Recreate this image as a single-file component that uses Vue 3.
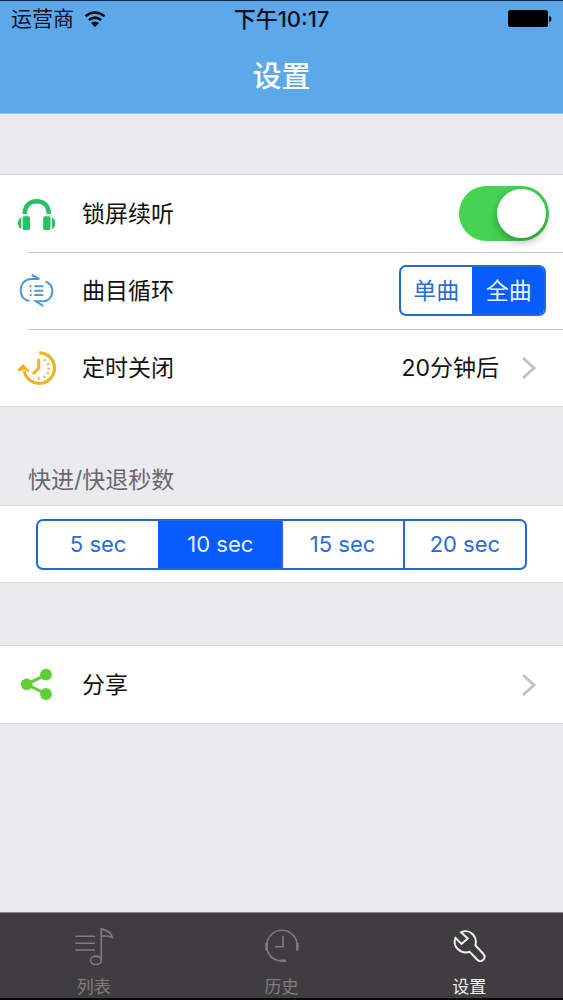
<script setup>
import { ref } from 'vue'

const keepPlaying = ref(true)
const loopMode = ref('all')
const loopOptions = [
  { value: 'one', label: '单曲' },
  { value: 'all', label: '全曲' },
]
const seconds = ref(10)
const secondOptions = [5, 10, 15, 20]
</script>

<template>
  <div class="page">
    <header class="header">
      <div class="status">
        <div class="carrier">
          <span>运营商</span>
          <svg class="wifi" viewBox="0 0 22 17" aria-hidden="true">
            <path d="M1.500 5.200Q11 -2.200 20.500 5.200M4.900 9Q11 4.400 17.100 9" />
            <path class="solid" d="M7 12Q11 8.800 15 12L11 16.300Z" />
          </svg>
        </div>
        <time class="clock">下午10:17</time>
        <div class="power">
          <svg class="battery" viewBox="0 0 44 18" aria-hidden="true">
            <rect x="0" y="0" width="40" height="17" rx="2.500" />
            <path d="M41 6Q43.500 6.500 43.500 9Q43.500 11.500 41 12Z" />
          </svg>
        </div>
      </div>
      <h1 class="title">设置</h1>
    </header>

    <main class="content">
      <section class="group">
        <div class="row">
          <svg class="icon headphones" viewBox="0 0 40 40" aria-hidden="true">
            <path class="band" d="M7.800 20V19C7.800 11.500 13 7.300 19.700 7.300S31.700 11.500 31.700 19V20" />
            <rect x="5.700" y="22.300" width="7.300" height="13.700" rx="1.500" />
            <rect x="26.200" y="22.300" width="7.300" height="13.700" rx="1.500" />
            <path d="M4.300 23.500V35Q1 33.500 1 29.200T4.300 23.500ZM35 23.500V35Q38.300 33.500 38.300 29.200T35 23.500Z" />
          </svg>
          <label class="label" for="keep">锁屏续听</label>
          <input id="keep" v-model="keepPlaying" class="switch" type="checkbox" role="switch" />
        </div>
        <div class="row divided">
          <svg class="icon loop" viewBox="0 0 40 40" aria-hidden="true">
            <path d="M12.500 30C6.500 29 3.700 24.500 3.700 19.700C3.700 12 8.500 8.200 14 8H22.300L14.700 4" />
            <path d="M28.700 10.500C33 12.200 35.300 16 35.300 20C35.300 26.500 31 30.300 26 30.300H18.700L26.300 35" />
            <path d="M17.300 15.300H26.300M17.300 19.700H26.300M17.300 24.100H26.300M12.800 15.300H14.600M12.800 19.700H14.600M12.800 24.100H14.600" />
          </svg>
          <span id="loop-label" class="label">曲目循环</span>
          <div class="segments loop-mode" role="radiogroup" aria-labelledby="loop-label">
            <label v-for="o in loopOptions" :key="o.value" class="segment">
              <input v-model="loopMode" type="radio" name="loop" :value="o.value" />
              <span>{{ o.label }}</span>
            </label>
          </div>
        </div>
        <button type="button" class="row divided">
          <svg class="icon timer" viewBox="0 0 40 40" aria-hidden="true">
            <path class="ring" d="M22.300 4.800A15.300 15.300 0 1 1 7.200 23" />
            <path class="fill" d="M1.500 21.500L6 17L12 23.200L6.500 20.800L2.500 22.800Z" />
            <path class="hands" d="M21.700 12V20.300L16.700 25.300" />
            <path class="ticks" d="M27 13L28.600 11.200M30 16.700L32.500 15.600M30.500 20.500H33.200M29.800 24.400L32 25.800M26.600 27.600L28 29.900M21.700 29V32" />
          </svg>
          <span class="label">定时关闭</span>
          <span class="value">20分钟后</span>
          <svg class="chevron" viewBox="0 0 16 24" aria-hidden="true"><path d="M2 2L13 12L2 22" /></svg>
        </button>
      </section>

      <h2 id="seconds-label" class="caption">快进/快退秒数</h2>
      <section class="group">
        <div class="row seconds">
          <div class="segments wide" role="radiogroup" aria-labelledby="seconds-label">
            <label v-for="s in secondOptions" :key="s" class="segment">
              <input v-model="seconds" type="radio" name="seconds" :value="s" />
              <span>{{ s }} sec</span>
            </label>
          </div>
        </div>
      </section>

      <section class="group share-group">
        <button type="button" class="row">
          <svg class="icon share" viewBox="0 0 40 40" aria-hidden="true">
            <path d="M29 9.700L9.700 19.300L29 29" />
            <circle cx="9.700" cy="19.300" r="5.800" />
            <circle cx="29" cy="9.700" r="5.900" />
            <circle cx="29" cy="29" r="5.900" />
          </svg>
          <span class="label">分享</span>
          <svg class="chevron" viewBox="0 0 16 24" aria-hidden="true"><path d="M2 2L13 12L2 22" /></svg>
        </button>
      </section>
    </main>

    <nav class="tabs">
      <a href="#list" class="tab">
        <svg viewBox="0 0 40 40" aria-hidden="true">
          <path d="M1.300 10.300H21M1.300 17.300H21M1.300 24H21" />
          <path d="M27.300 34.500V2.700C31 4 37.500 5.500 38.300 11.300C35 9.800 31 10 27.300 10" />
          <ellipse cx="21.900" cy="34.300" rx="5.400" ry="4.200" />
        </svg>
        <span>列表</span>
      </a>
      <a href="#history" class="tab">
        <svg viewBox="0 0 40 40" aria-hidden="true">
          <path d="M24 34.700H18C10.500 34 4.700 28 4.700 20C4.700 11 11.500 4.300 19.900 4.300S35.200 11 35.200 20V24" />
          <path class="thick" d="M4.500 17V24.500M35.300 17V24.500M18.500 34.700H24" />
          <path d="M21 9.700V20.700H13" />
        </svg>
        <span>历史</span>
      </a>
      <a href="#settings" class="tab active" aria-current="page">
        <svg viewBox="0 0 40 40" aria-hidden="true">
          <path d="M12 6.300C16 4.500 21 5 24 8.500C27 12 27.500 15.500 26.500 19.500L34 27.500C36 29.700 36 32 34.300 33.800C32.500 35.600 30 35.600 28.300 33.800L20.700 25.800C16.500 27 12 26.300 8.700 23C5.500 19.800 5 15.500 6.500 12L12.500 18L18.800 12.400Z" />
        </svg>
        <span>设置</span>
      </a>
    </nav>
  </div>
</template>

<style>
body {
  margin: 0;
}
</style>

<style scoped>
.page {
  display: flex;
  flex-direction: column;
  min-height: 100vh;
  box-sizing: border-box;
  background: #ebeaee;
  color: #111;
  font-family: Inter, "Noto Sans CJK SC", sans-serif;
  font-size: 23px;
  line-height: 32px;
}
.header {
  border-top: 1px solid #0c2145;
  border-bottom: 1px solid #b3bcca;
  background: #5ca8e9;
}
.status {
  display: grid;
  grid-template-columns: 1fr auto 1fr;
  align-items: center;
  height: 36px;
  padding: 0 11px;
  color: #08111d;
  font-size: 21px;
}
.carrier {
  display: flex;
  align-items: center;
  gap: 10px;
}
.wifi {
  width: 22px;
  height: 17px;
  fill: none;
  stroke: #050a12;
  stroke-width: 2.6;
}
.wifi .solid {
  fill: #050a12;
  stroke: none;
}
.clock {
  font-size: 22px;
  font-weight: 500;
}
.power {
  display: flex;
  justify-content: flex-end;
}
.battery {
  width: 44px;
  height: 18px;
  fill: #000;
}
.title {
  margin: 0;
  padding: 20px 0 16px;
  color: #fff;
  font-size: 29px;
  font-weight: 500;
  line-height: 40px;
  text-align: center;
}
.content {
  flex: 1;
  padding-top: 60px;
}
.group {
  border-top: 1px solid #d9d9dc;
  border-bottom: 1px solid #d9d9dc;
  background: #fff;
}
.row {
  position: relative;
  display: flex;
  align-items: center;
  box-sizing: border-box;
  width: 100%;
  height: 77px;
  margin: 0;
  padding: 0 14px 0 17px;
  border: 0;
  background: none;
  color: inherit;
  font: inherit;
  text-align: left;
}
.divided::before {
  content: "";
  position: absolute;
  top: 0;
  right: 0;
  left: 28px;
  height: 1px;
  background: #c9c9cc;
}
.icon {
  flex: none;
  width: 40px;
  height: 40px;
  margin-right: 25px;
  fill: none;
}
.label {
  flex: 1;
}
.headphones {
  fill: #2abf62;
}
.headphones .band {
  fill: none;
  stroke: #2abf62;
  stroke-width: 4.4;
}
.loop {
  stroke: #4f97d6;
  stroke-width: 2;
}
.timer {
  stroke: #eab520;
}
.timer .ring {
  stroke-width: 3.2;
}
.timer .fill {
  fill: #eab520;
  stroke-width: 1.5;
}
.timer .hands {
  stroke-width: 3;
  stroke-linecap: round;
}
.timer .ticks {
  stroke-width: 1.6;
}
.share {
  fill: #5fcf35;
}
.share path {
  fill: none;
  stroke: #5fcf35;
  stroke-width: 3;
}
.switch {
  position: relative;
  appearance: none;
  width: 90px;
  height: 55px;
  margin: 0;
  border-radius: 28px;
  background: #d8d8dc;
}
.switch::before {
  content: "";
  position: absolute;
  top: 3px;
  left: 3px;
  width: 49px;
  height: 49px;
  border-radius: 50%;
  background: #fff;
  box-shadow: 0 4px 8px rgba(0, 0, 0, 0.3);
}
.switch:checked {
  background: #45d351;
}
.switch:checked::before {
  left: 38px;
}
.segments {
  display: flex;
  box-sizing: border-box;
  height: 51px;
  overflow: hidden;
  border: 2px solid #2468d4;
  border-radius: 7px;
  color: #2a6cd6;
  font-size: 23px;
}
.loop-mode {
  width: 147px;
  margin-right: 3px;
}
.wide {
  flex: 1;
}
.row.seconds {
  height: 76px;
  padding: 0 36px;
}
.row.seconds .segments {
  font-size: 22px;
}
.segment {
  position: relative;
  display: flex;
  flex: 1;
}
.segment + .segment {
  border-left: 2px solid #2468d4;
}
.segment input {
  position: absolute;
  inset: 0;
  margin: 0;
  opacity: 0;
}
.segment span {
  display: flex;
  flex: 1;
  align-items: center;
  justify-content: center;
}
.segment input:checked + span {
  background: #075dfc;
  color: #e4f3ff;
}
.segment:has(input:checked) {
  border-color: #075dfc;
}
.value {
  margin-right: 22px;
}
.chevron {
  flex: none;
  width: 16px;
  height: 24px;
  margin-right: 12px;
  fill: none;
  stroke: #c2c2c5;
  stroke-width: 3;
}
.caption {
  margin: 0;
  padding: 57px 28px 9px;
  color: #69696d;
  font-size: 23px;
  font-weight: 400;
}
.share-group {
  margin-top: 62px;
}
.tabs {
  display: flex;
  border-top: 1px solid #89888c;
  border-bottom: 2px solid #050505;
  background: #3f3d3f;
}
.tab {
  display: flex;
  flex: 1;
  flex-direction: column;
  align-items: center;
  padding: 13px 0 0;
  color: #7e7c7e;
  font-size: 17px;
  line-height: 22px;
  text-decoration: none;
}
.tab svg {
  width: 40px;
  height: 40px;
  margin-bottom: 10px;
  fill: none;
  stroke: currentColor;
  stroke-width: 1.6;
}
.tab .thick {
  stroke-width: 2.6;
}
.tab.active {
  color: #f2f2f2;
}
.tab.active svg {
  stroke-width: 2;
}
</style>
